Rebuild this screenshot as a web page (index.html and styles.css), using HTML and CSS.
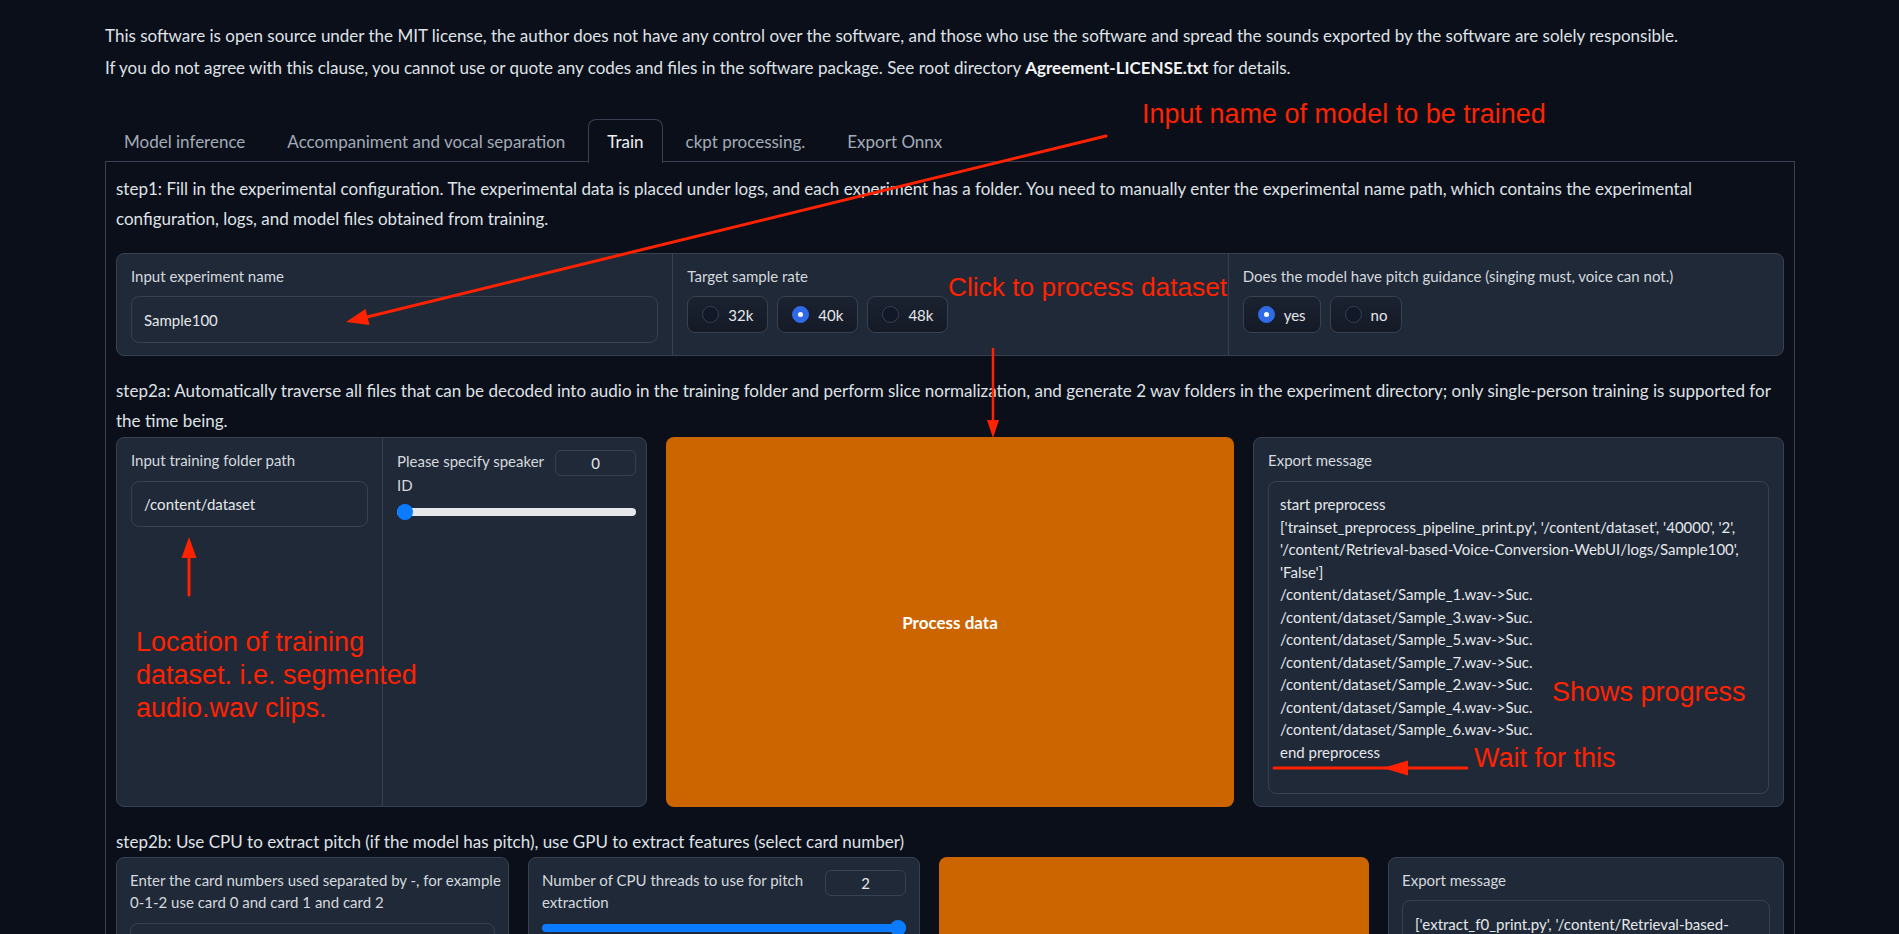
FILE: index.html
```html
<!DOCTYPE html>
<html lang="en">
<head>
<meta charset="utf-8">
<title>RVC WebUI - Train</title>
<link rel="stylesheet" href="styles.css">
</head>
<body>
<div class="page">
  <div class="intro">
    <p>This software is open source under the MIT license, the author does not have any control over the software, and those who use the software and spread the sounds exported by the software are solely responsible.</p>
    <p>If you do not agree with this clause, you cannot use or quote any codes and files in the software package. See root directory <strong>Agreement-LICENSE.txt</strong> for details.</p>
  </div>

  <div class="tabs">
    <div class="tab-nav">
      <span class="tab">Model inference</span>
      <span class="tab">Accompaniment and vocal separation</span>
      <span class="tab selected">Train</span>
      <span class="tab">ckpt processing.</span>
      <span class="tab">Export Onnx</span>
    </div>

    <div class="tab-panel">
      <div class="md step1">step1: Fill in the experimental configuration. The experimental data is placed under logs, and each experiment has a folder. You need to manually enter the experimental name path, which contains the experimental configuration, logs, and model files obtained from training.</div>

      <div class="block row1">
        <div class="col">
          <div class="lbl">Input experiment name</div>
          <div class="textbox tall">Sample100</div>
        </div>
        <div class="col">
          <div class="lbl">Target sample rate</div>
          <div class="radios">
            <span class="radio"><span class="dot"></span>32k</span>
            <span class="radio"><span class="dot on"></span>40k</span>
            <span class="radio"><span class="dot"></span>48k</span>
          </div>
        </div>
        <div class="col">
          <div class="lbl">Does the model have pitch guidance (singing must, voice can not.)</div>
          <div class="radios">
            <span class="radio"><span class="dot on"></span>yes</span>
            <span class="radio"><span class="dot"></span>no</span>
          </div>
        </div>
      </div>

      <div class="md step2a">step2a: Automatically traverse all files that can be decoded into audio in the training folder and perform slice normalization, and generate 2 wav folders in the experiment directory; only single-person training is supported for the time being.</div>

      <div class="row row2">
        <div class="block split">
          <div class="col">
            <div class="lbl">Input training folder path</div>
            <div class="textbox path">/content/dataset</div>
          </div>
          <div class="col">
            <div class="numhead">
              <div class="lbl wrap">Please specify speaker ID</div>
              <div class="num">0</div>
            </div>
            <div class="slider"><span class="thumb"></span></div>
          </div>
        </div>
        <div class="primary">Process data</div>
        <div class="block export">
          <div class="lbl">Export message</div>
          <div class="textarea big">start preprocess<br>['trainset_preprocess_pipeline_print.py', '/content/dataset', '40000', '2',<br>'/content/Retrieval-based-Voice-Conversion-WebUI/logs/Sample100',<br>'False']<br>/content/dataset/Sample_1.wav-&gt;Suc.<br>/content/dataset/Sample_3.wav-&gt;Suc.<br>/content/dataset/Sample_5.wav-&gt;Suc.<br>/content/dataset/Sample_7.wav-&gt;Suc.<br>/content/dataset/Sample_2.wav-&gt;Suc.<br>/content/dataset/Sample_4.wav-&gt;Suc.<br>/content/dataset/Sample_6.wav-&gt;Suc.<br>end preprocess</div>
        </div>
      </div>

      <div class="md step2b">step2b: Use CPU to extract pitch (if the model has pitch), use GPU to extract features (select card number)</div>

      <div class="row row3">
        <div class="block card">
          <div class="lbl nowrap">Enter the card numbers used separated by -, for example<br>0-1-2 use card 0 and card 1 and card 2</div>
          <div class="textbox gpu"></div>
        </div>
        <div class="block card">
          <div class="numhead">
            <div class="lbl wrap2">Number of CPU threads to use for pitch extraction</div>
            <div class="num">2</div>
          </div>
          <div class="slider full"><span class="thumb"></span></div>
        </div>
        <div class="primary"></div>
        <div class="block card">
          <div class="lbl">Export message</div>
          <div class="textarea small">['extract_f0_print.py', '/content/Retrieval-based-<br>Voice-Conversion-WebUI/logs/Sample100', '2', 'pm']</div>
        </div>
      </div>
    </div>
  </div>

  <svg class="annot" width="1899" height="934" viewBox="0 0 1899 934" aria-hidden="true">
    <g stroke="#ff2200" stroke-width="3" fill="none" stroke-linecap="round">
      <line x1="1106" y1="136" x2="367" y2="317"/>
      <line x1="993" y1="349" x2="993" y2="422" stroke-width="2.5"/>
      <line x1="189" y1="595" x2="189" y2="555"/>
      <line x1="1274" y1="768" x2="1467" y2="768"/>
    </g>
    <g fill="#ff2200">
      <polygon points="346,322 369.5,325 365.5,309"/>
      <polygon points="993,438 987,420 999,420"/>
      <polygon points="189,537 181.5,558 196.5,558"/>
      <polygon points="1383,768 1408,760.5 1408,775.5"/>
    </g>
  </svg>
  <div class="note n1">Input name of model to be trained</div>
  <div class="note n2">Click to process dataset</div>
  <div class="note n3">Location of training<br>dataset. i.e. segmented<br>audio.wav clips.</div>
  <div class="note n4">Shows progress</div>
  <div class="note n5">Wait for this</div>
</div>
</body>
</html>
```

FILE: styles.css
```css
* { box-sizing: border-box; }

html, body {
  margin: 0;
  background: #0b0f19;
  overflow: hidden;
}

body {
  font-family: "Lato", "Noto Sans", sans-serif;
  color: #e5e7eb;
  font-size: 17px;
}

.page {
  position: relative;
  padding: 0 104px 0 105px;
  height: 934px;
}

.intro {
  padding-top: 20px;
  color: #dfe2e7;
}
.intro p {
  margin: 0;
  line-height: 32px;
}
.intro strong { font-weight: 700; color: #f3f4f6; }

.tabs { margin-top: 35px; }

.tab-nav {
  display: flex;
  height: 43px;
  position: relative;
  z-index: 1;
}
.tab {
  display: flex;
  align-items: center;
  padding: 0 18px;
  height: 43px;
  color: #a2abb8;
  font-size: 17px;
  border: 1px solid transparent;
  border-bottom: none;
  white-space: nowrap;
}
.tab + .tab { margin-left: 4px; }
.tab.selected {
  color: #eef0f3;
  border-color: #374151;
  border-radius: 8px 8px 0 0;
  background: #0b0f19;
  height: 44px;
}

.tab-panel {
  border: 1px solid #374151;
  border-bottom: none;
  margin-top: -1px;
  padding: 12px 10px 0 10px;
  height: 800px;
}

.md {
  font-size: 17px;
  line-height: 30px;
  color: #dfe2e7;
}

.block {
  background: #1f2937;
  border: 1px solid #374151;
  border-radius: 8px;
}

.lbl {
  font-size: 15px;
  line-height: 22px;
  color: #d5d9df;
}
.lbl.nowrap { white-space: nowrap; }

/* step 1 */
.row1 {
  margin-top: 19px;
  height: 103px;
  display: grid;
  grid-template-columns: 1fr 1fr 1fr;
}
.row1 .col {
  padding: 11px 14px 0 14px;
}
.row1 .col + .col { border-left: 1px solid #374151; }

.textbox {
  border: 1px solid #374151;
  border-radius: 8px;
  background: #1f2937;
  display: flex;
  align-items: center;
  padding: 0 12px;
  font-size: 15px;
  color: #e5e7eb;
}
.textbox.tall { height: 47px; margin-top: 9px; }

.radios {
  display: flex;
  gap: 9px;
  margin-top: 9px;
}
.radio {
  display: flex;
  align-items: center;
  gap: 9px;
  height: 37px;
  padding: 0 14px;
  border: 1px solid #374151;
  border-radius: 8px;
  background: linear-gradient(#1b2230, #141a26);
  font-size: 15px;
  color: #e5e7eb;
}
.dot {
  width: 17px;
  height: 17px;
  border-radius: 50%;
  border: 1px solid #374151;
  background: #111827;
  position: relative;
}
.dot.on {
  background: #2f6be6;
  border-color: #2f6be6;
}
.dot.on::after {
  content: "";
  position: absolute;
  left: 5px;
  top: 5px;
  width: 5px;
  height: 5px;
  border-radius: 50%;
  background: #fff;
}

/* step 2a */
.step2a { margin-top: 20px; }

.row {
  display: grid;
  gap: 19px;
}
.row2 {
  margin-top: 1px;
  height: 370px;
  grid-template-columns: 531px 568px 1fr;
}
.split {
  display: grid;
  grid-template-columns: 265px 1fr;
}
.split .col { padding: 11px 14px; }
.split .col + .col { border-left: 1px solid #374151; }

.textbox.path { height: 46px; margin-top: 10px; }

.numhead {
  display: flex;
  align-items: flex-start;
  justify-content: space-between;
  gap: 8px;
}
.lbl.wrap { width: 150px; line-height: 24px; }
.num {
  flex: none;
  width: 81px;
  height: 26px;
  border: 1px solid #374151;
  border-radius: 6px;
  display: flex;
  align-items: center;
  justify-content: center;
  font-size: 15px;
  color: #e5e7eb;
  margin-top: 1px;
}

.slider {
  position: relative;
  height: 8px;
  margin-top: 11px;
  border-radius: 4px;
  background: #e6e7ea;
}
.slider .thumb {
  position: absolute;
  left: 0;
  top: -4px;
  width: 16px;
  height: 16px;
  border-radius: 50%;
  background: #0b7cff;
}
.slider.full { background: #0b7cff; }
.slider.full .thumb { left: auto; right: 0; }

.primary {
  background: #cc6500;
  border-radius: 8px;
  display: flex;
  align-items: center;
  justify-content: center;
  color: #ffffff;
  font-weight: 700;
  font-size: 17px;
}

.export { padding: 11px 14px 12px 14px; display: flex; flex-direction: column; }
.textarea {
  border: 1px solid #374151;
  border-radius: 8px;
  font-size: 15px;
  color: #e5e7eb;
}
.textarea.big {
  margin-top: 10px;
  flex: 1;
  padding: 11px 11px;
  line-height: 22.5px;
}

/* step 2b */
.step2b { margin-top: 20px; }
.row3 {
  margin-top: 0;
  height: 370px;
  grid-template-columns: 393px 392px 430px 1fr;
}
.card { padding: 11px 13px; }
.textbox.gpu { height: 46px; margin-top: 10px; }
.lbl.wrap2 { width: 268px; }
.textarea.small {
  margin-top: 9px;
  height: 120px;
  padding: 12px 12px;
  line-height: 22px;
}

/* annotations */
.annot {
  position: absolute;
  left: 0;
  top: 0;
  pointer-events: none;
}
.note {
  position: absolute;
  font-family: "Liberation Sans", Arial, sans-serif;
  font-size: 27px;
  line-height: 30px;
  color: #ff2200;
  white-space: nowrap;
}
.n1 { left: 1142px; top: 99px; }
.n2 { left: 948px; top: 272px; font-size: 26.3px; }
.n3 { left: 136px; top: 626px; line-height: 33px; }
.n4 { left: 1552px; top: 677px; }
.n5 { left: 1474px; top: 743px; }
```
